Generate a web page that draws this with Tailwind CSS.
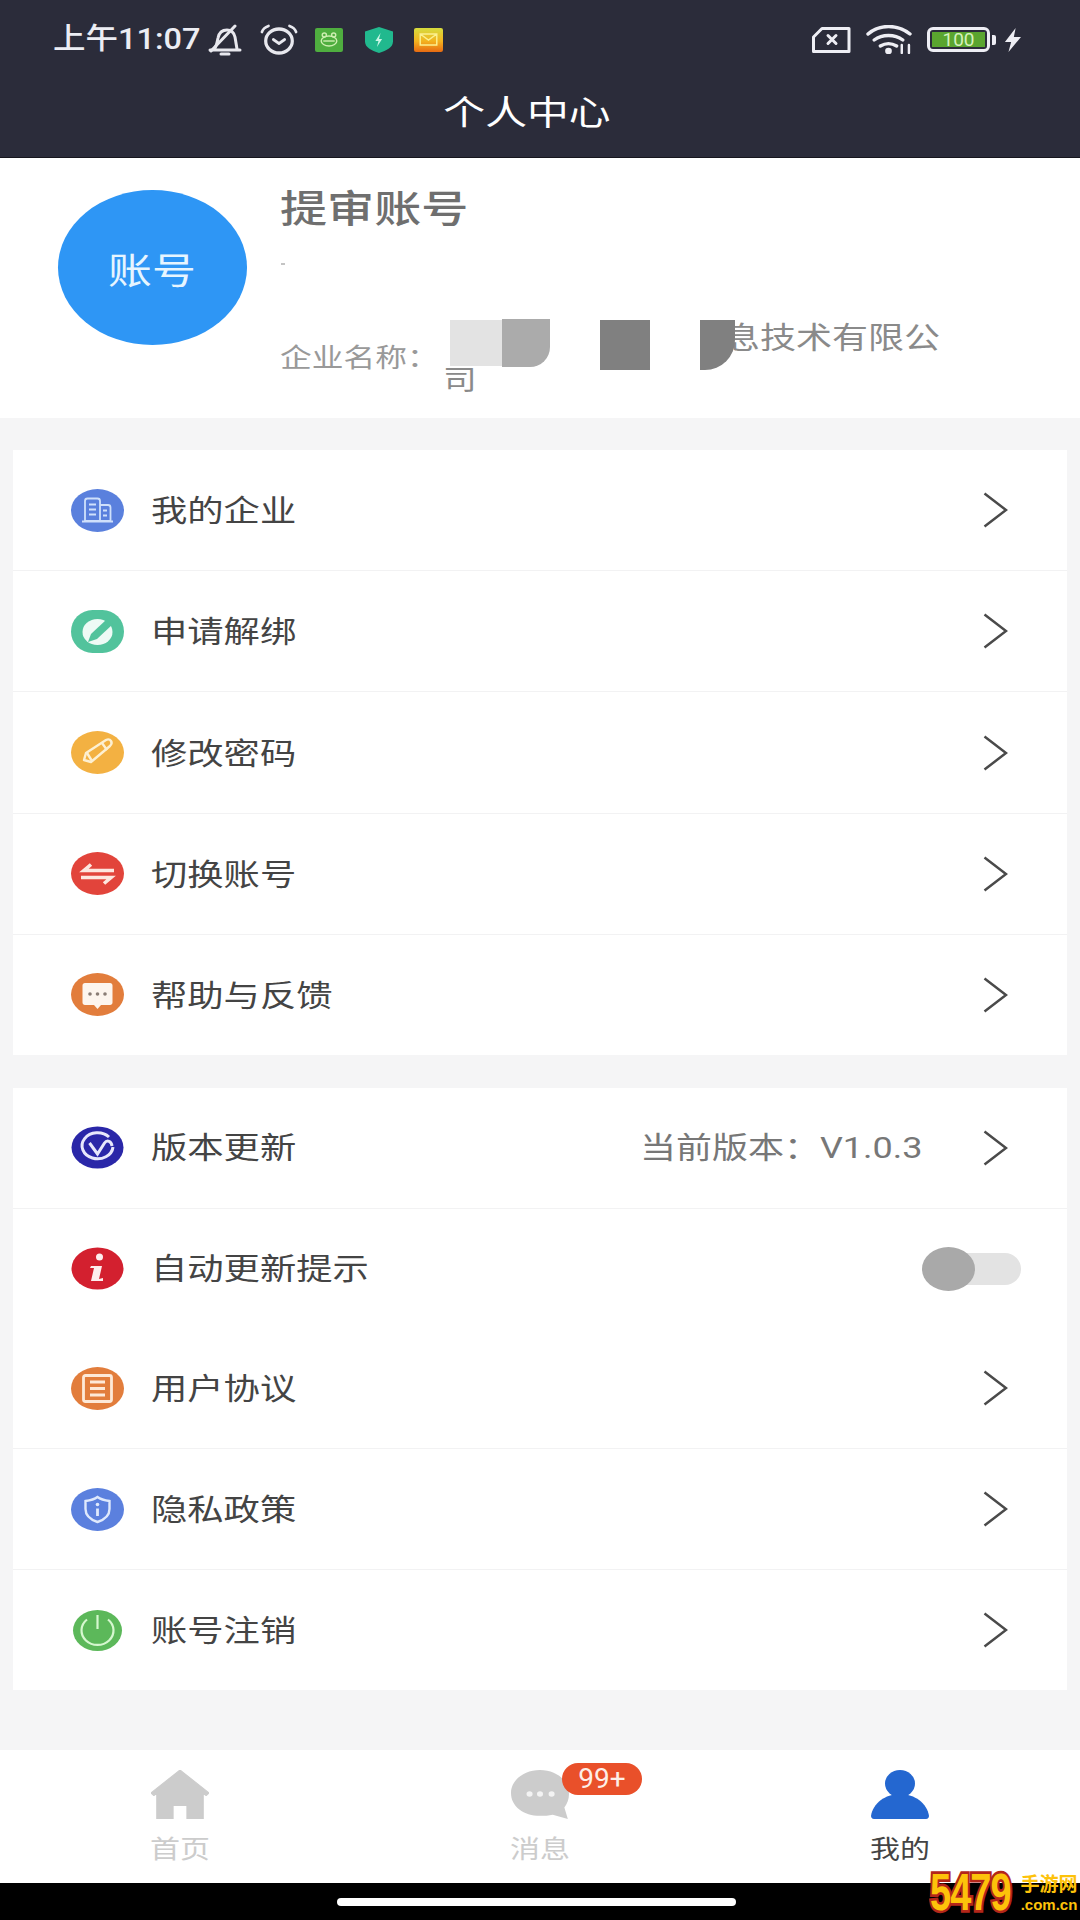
<!DOCTYPE html>
<html lang="zh-CN">
<head>
    <meta charset="UTF-8">
    <meta name="viewport" content="width=device-width, initial-scale=1.0">
    <title>个人中心</title>
    <script src="https://cdn.jsdelivr.net/npm/@tailwindcss/browser@4"></script>
</head>
<body class="bg-[#f5f5f6] font-['Noto_Sans_CJK_SC',sans-serif]">
<div class="relative flex h-[1920px] w-[1080px] flex-col overflow-hidden">

    <!-- header -->
    <header class="flex h-[158px] shrink-0 flex-col border-b border-[#16161d] bg-[#2b2c3a] text-white">
        <div class="flex h-[78px] items-center pl-[53px] pr-[59px] pt-[1px]">
            <span class="inline-block w-[147px] origin-left scale-x-[1.12] whitespace-nowrap font-['Roboto','Noto_Sans_CJK_SC',sans-serif] text-[29px] font-medium leading-none text-[#ecedf3]">上午11:07</span>
            <svg class="ml-[7px] h-[32px] w-[36px]" viewBox="0 0 36 32" preserveAspectRatio="none" fill="none" stroke="#e8e8ee" stroke-width="3" stroke-linecap="round" stroke-linejoin="round"><path d="M3 26h30M7 25c3-3 3-7 4-11 1-5 4-8 9-8 4 0 7 3 8 7l2 12"/><path d="M4 27 28 2"/><path d="M14 30h8"/></svg>
            <svg class="ml-[17px] h-[32px] w-[38px]" viewBox="0 0 40 32" preserveAspectRatio="none" fill="none" stroke="#e8e8ee" stroke-linecap="round" stroke-linejoin="round"><ellipse cx="20" cy="17" rx="14" ry="12" stroke-width="3.400"/><path d="M14 15.500l6 4 6-4" stroke-width="2.800"/><path d="M2 8c1-3 4-5 7-6M38 8c-1-3-4-5-7-6" stroke-width="2.800"/></svg>
            <svg class="ml-[17px] h-[24px] w-[28px]" viewBox="0 0 27 24" preserveAspectRatio="none"><rect width="27" height="24" rx="2" fill="#4fae3f"/><g fill="none" stroke="#cdeeb0" stroke-width="1.400"><circle cx="9" cy="7" r="2"/><circle cx="18" cy="7" r="2"/><ellipse cx="13.500" cy="13" rx="7.500" ry="5"/><path d="M8 13h11"/></g></svg>
            <svg class="ml-[22px] h-[26px] w-[28px]" viewBox="0 0 27 26" preserveAspectRatio="none"><path d="M13.500 0 27 4.500v10c0 6-6 9-13.500 11.500C6 23.500 0 20.500 0 14.500v-10z" fill="#21b98e"/><path d="M15 6l-5 8h3l-1.500 6 5-8h-3z" fill="#c9f5e5"/></svg>
            <svg class="ml-[21px] h-[24px] w-[29px]" viewBox="0 0 28 24" preserveAspectRatio="none"><defs><linearGradient id="mailbg" x1="0" y1="0" x2="0" y2="1"><stop offset="0" stop-color="#d6dc3e"/><stop offset="0.55" stop-color="#f3b31f"/><stop offset="1" stop-color="#e76a12"/></linearGradient></defs><rect width="28" height="24" rx="2" fill="url(#mailbg)"/><path d="M6 6h16v11H6zM6 6l8 6 8-6" fill="none" stroke="#fbf08f" stroke-width="1.400"/></svg>

            <svg class="ml-auto h-[26px] w-[39px]" viewBox="0 0 39 26" fill="none" stroke="#eeeef4" stroke-linecap="round" stroke-linejoin="round"><path d="M10 1.500h27v23H1.500V10z" stroke-width="3"/><path d="M16 8.500l8 8M24 8.500l-8 8" stroke-width="3"/></svg>
            <svg class="ml-[15px] h-[29px] w-[46px]" viewBox="0 0 45 29" preserveAspectRatio="none" fill="none" stroke="#eeeef4" stroke-width="3.400" stroke-linecap="round"><path d="M2 9C13-1 31-1 43 9"/><path d="M8 15c8-6 20-6 28 0"/><path d="M14 21c5-3 11-3 16 0"/><circle cx="22" cy="26" r="1.600" fill="#eeeef4"/><path d="M35 20v8M42 20v8" stroke-width="2.400"/></svg>
            <div class="ml-[15px] flex h-[25px] w-[63px] items-center rounded-[6px] border-[3px] border-[#eeeef4] p-[2px]">
                <span class="flex h-full w-full items-center justify-center bg-[#5aa52f] font-['Roboto',sans-serif] text-[19px] leading-none text-[#d5f2bc]">100</span>
            </div>
            <span class="ml-[2px] h-[10px] w-[4px] rounded-r-[2px] bg-[#eeeef4]"></span>
            <svg class="ml-[8px] h-[24px] w-[17px]" viewBox="0 0 19 24" preserveAspectRatio="none"><path d="M13 0 1 14h7l-3 10L19 9h-8z" fill="#eeeef4"/></svg>
        </div>
        <div class="flex flex-1 items-start justify-center pr-[26px] pt-[15px]">
            <span class="inline-block scale-x-[1.23] text-[34px] leading-[36px] text-white">个人中心</span>
        </div>
    </header>

    <!-- profile -->
    <section class="relative flex h-[260px] shrink-0 bg-white pl-[58px] pt-[32px]">
        <div class="flex h-[155px] w-[189px] shrink-0 items-center justify-center rounded-[50%] bg-[#2e96f5]">
            <span class="inline-block scale-x-[1.22] text-[36px] leading-none text-[#e6f5ff]">账号</span>
        </div>
        <div class="ml-[33px] flex flex-col">
            <span class="mt-[-4px] inline-block origin-left scale-x-[1.24] text-[38px] font-medium leading-[40px] text-[#6f6f6f]">提审账号</span>
            <span class="ml-[1px] mt-[37px] h-[2px] w-[4px] bg-[#c4c4c4]"></span>
            <div class="relative mt-[54px] h-[80px] w-[700px]">
                <span class="absolute left-0 top-[22px] inline-block origin-left scale-x-[1.22] whitespace-nowrap text-[26px] leading-[30px] text-[#999999]">企业名称：</span>
                <span class="absolute left-[444px] top-0 inline-block origin-left scale-x-[1.2] text-[30px] leading-[32px] text-[#8a8a8a]">息技术有限公</span>
                <span class="absolute left-[163px] top-[44px] inline-block origin-left scale-x-[1.2] text-[28px] leading-[30px] text-[#8a8a8a]">司</span>
                <span class="absolute left-[170px] top-[1px] h-[46px] w-[52px] bg-[#e3e3e3]"></span>
                <span class="absolute left-[222px] top-0 h-[48px] w-[48px] rounded-br-[20px] bg-[#ababab]"></span>
                <span class="absolute left-[320px] top-[1px] h-[50px] w-[50px] bg-[#808080]"></span>
                <span class="absolute left-[420px] top-[1px] h-[50px] w-[35px] rounded-br-[30px] bg-[#808080]"></span>
            </div>
        </div>
    </section>

    <!-- first group -->
    <section class="mx-[13px] mt-[32px] flex h-[605px] shrink-0 flex-col bg-white">
        <div class="flex flex-1 items-center border-b border-[#f2f2f3] pl-[58px] pr-[59px]">
            <svg class="h-[43px] w-[53px]" viewBox="0 0 53 43"><ellipse cx="26.500" cy="21.500" rx="26.500" ry="21.500" fill="#5a80dd"/><g fill="none" stroke="#cfe0fb" stroke-width="1.800"><path d="M14 12c0-1.500 1-2.500 2.500-2.500h10c1.500 0 2.500 1 2.500 2.500v20H14zM29 16h8c1.500 0 2.500 1 2.500 2.500V32H29M11 32.500h31"/><path d="M18 15.500h7M18 20.500h7M18 25.500h7M32 21.500h4M32 26.500h4"/></g></svg>
            <span class="mb-[4px] ml-[27px] inline-block origin-left scale-x-[1.21] text-[30px] leading-none text-[#444444]">我的企业</span>
            <svg class="ml-auto h-[36px] w-[25px]" viewBox="0 0 25 36" fill="none" stroke="#4a4a4a" stroke-width="2.500"><path d="M1.500 1.500 23 18 1.500 34.500"/></svg>
        </div>
        <div class="flex flex-1 items-center border-b border-[#f2f2f3] pl-[58px] pr-[59px]">
            <svg class="h-[43px] w-[53px]" viewBox="0 0 53 43"><rect width="53" height="43" rx="21.500" fill="#52c39c"/><ellipse cx="26.500" cy="22" rx="15" ry="13" fill="#eefaf5"/><path d="M17 32l3-8L36 9l6 5-16 15z" fill="#52c39c"/></svg>
            <span class="mb-[4px] ml-[27px] inline-block origin-left scale-x-[1.21] text-[30px] leading-none text-[#444444]">申请解绑</span>
            <svg class="ml-auto h-[36px] w-[25px]" viewBox="0 0 25 36" fill="none" stroke="#4a4a4a" stroke-width="2.500"><path d="M1.500 1.500 23 18 1.500 34.500"/></svg>
        </div>
        <div class="flex flex-1 items-center border-b border-[#f2f2f3] pl-[58px] pr-[59px]">
            <svg class="h-[43px] w-[53px]" viewBox="0 0 53 43"><ellipse cx="26.500" cy="21.500" rx="26.500" ry="21.500" fill="#f3b142"/><g fill="none" stroke="#fdf0d2" stroke-width="2.400" stroke-linejoin="round"><path d="M13 29l2-7 20-13c2-1 4-.5 5 1s.5 3.500-1 5L20 31z"/><path d="M16 22l5 8M31 12l5 7"/></g></svg>
            <span class="mb-[4px] ml-[27px] inline-block origin-left scale-x-[1.21] text-[30px] leading-none text-[#444444]">修改密码</span>
            <svg class="ml-auto h-[36px] w-[25px]" viewBox="0 0 25 36" fill="none" stroke="#4a4a4a" stroke-width="2.500"><path d="M1.500 1.500 23 18 1.500 34.500"/></svg>
        </div>
        <div class="flex flex-1 items-center border-b border-[#f2f2f3] pl-[58px] pr-[59px]">
            <svg class="h-[43px] w-[53px]" viewBox="0 0 53 43"><ellipse cx="26.500" cy="21.500" rx="26.500" ry="21.500" fill="#e2443b"/><g fill="none" stroke="#fde6df" stroke-width="3.600"><path d="M43 18.500H13l7-6"/><path d="M10 25.500h30l-7 6"/></g></svg>
            <span class="mb-[4px] ml-[27px] inline-block origin-left scale-x-[1.21] text-[30px] leading-none text-[#444444]">切换账号</span>
            <svg class="ml-auto h-[36px] w-[25px]" viewBox="0 0 25 36" fill="none" stroke="#4a4a4a" stroke-width="2.500"><path d="M1.500 1.500 23 18 1.500 34.500"/></svg>
        </div>
        <div class="flex flex-1 items-center pl-[58px] pr-[59px]">
            <svg class="h-[43px] w-[53px]" viewBox="0 0 53 43"><ellipse cx="26.500" cy="21.500" rx="26.500" ry="21.500" fill="#e27d3c"/><path d="M14 10h25c1.500 0 2.500 1 2.500 2.500v17c0 1.500-1 2.500-2.500 2.500h-9l-3.500 4-3.500-4h-9c-1.500 0-2.500-1-2.500-2.500v-17c0-1.500 1-2.500 2.500-2.500z" fill="#fdf5ee"/><g fill="#8a7d75"><circle cx="19" cy="21" r="1.800"/><circle cx="26.500" cy="21" r="1.800"/><circle cx="34" cy="21" r="1.800"/></g></svg>
            <span class="mb-[4px] ml-[27px] inline-block origin-left scale-x-[1.21] text-[30px] leading-none text-[#444444]">帮助与反馈</span>
            <svg class="ml-auto h-[36px] w-[25px]" viewBox="0 0 25 36" fill="none" stroke="#4a4a4a" stroke-width="2.500"><path d="M1.500 1.500 23 18 1.500 34.500"/></svg>
        </div>
    </section>

    <!-- second group -->
    <section class="mx-[13px] mt-[33px] flex h-[602px] shrink-0 flex-col bg-white">
        <div class="flex flex-1 items-center border-b border-[#f2f2f3] pl-[58px] pr-[59px]">
            <svg class="h-[43px] w-[53px]" viewBox="0 0 53 43"><ellipse cx="26.500" cy="21.500" rx="26" ry="21" fill="#2a27a8"/><path d="M38 11A15.500 13 0 1 0 42 21" fill="none" stroke="#e7e7fb" stroke-width="3"/><path d="M18.500 17l8 11 7-11c2.500-3.500 7-2 7.500 3" fill="none" stroke="#e7e7fb" stroke-width="3"/></svg>
            <span class="mb-[5px] ml-[27px] inline-block origin-left scale-x-[1.21] text-[30px] leading-none text-[#444444]">版本更新</span>
            <span class="mb-[3px] ml-auto inline-block origin-right scale-x-[1.2] whitespace-nowrap text-[30px] leading-none text-[#777777]">当前版本：<span class="font-['Roboto',sans-serif]">V1.0.3</span></span>
            <svg class="ml-[60px] h-[36px] w-[25px]" viewBox="0 0 25 36" fill="none" stroke="#4a4a4a" stroke-width="2.500"><path d="M1.500 1.500 23 18 1.500 34.500"/></svg>
        </div>
        <div class="flex flex-1 items-center pl-[58px] pr-[46px]">
            <svg class="h-[43px] w-[53px]" viewBox="0 0 53 43"><ellipse cx="26.500" cy="21.500" rx="26" ry="21" fill="#d3202f"/><circle cx="28.500" cy="10" r="3.500" fill="#fdeeee"/><path d="M20 19h11l-3 13 4-1v3H20l3-13h-4z" fill="#fdeeee"/></svg>
            <span class="mb-[5px] ml-[27px] inline-block origin-left scale-x-[1.21] text-[30px] leading-none text-[#444444]">自动更新提示</span>
            <div class="relative ml-auto h-[32px] w-[96px] rounded-full bg-[#e3e3e3]">
                <span class="absolute left-[-3px] top-[-6px] h-[44px] w-[53px] rounded-[50%] bg-[#a9a9a9]"></span>
            </div>
        </div>
        <div class="flex flex-1 items-center border-b border-[#f2f2f3] pl-[58px] pr-[59px]">
            <svg class="h-[43px] w-[53px]" viewBox="0 0 53 43"><ellipse cx="26.500" cy="21.500" rx="26.500" ry="21.500" fill="#e27d3c"/><rect x="12.500" y="8.500" width="28" height="26" rx="2" fill="none" stroke="#fde9d8" stroke-width="2.800"/><path d="M19 15h15M19 21.500h15M19 28h15" stroke="#fde9d8" stroke-width="2.800"/></svg>
            <span class="mb-[5px] ml-[27px] inline-block origin-left scale-x-[1.21] text-[30px] leading-none text-[#444444]">用户协议</span>
            <svg class="ml-auto h-[36px] w-[25px]" viewBox="0 0 25 36" fill="none" stroke="#4a4a4a" stroke-width="2.500"><path d="M1.500 1.500 23 18 1.500 34.500"/></svg>
        </div>
        <div class="flex flex-1 items-center border-b border-[#f2f2f3] pl-[58px] pr-[59px]">
            <svg class="h-[43px] w-[53px]" viewBox="0 0 53 43"><ellipse cx="26.500" cy="21.500" rx="26.500" ry="21.500" fill="#5b80de"/><path d="M26.500 9c4 3 8 3.500 12 4v8c0 7-6 11-12 13-6-2-12-6-12-13v-8c4-.5 8-1 12-4z" fill="none" stroke="#dfe9fc" stroke-width="2.400"/><circle cx="26.500" cy="16.500" r="1.800" fill="#dfe9fc"/><path d="M26.500 20.500v7.500" stroke="#dfe9fc" stroke-width="2.800"/></svg>
            <span class="mb-[5px] ml-[27px] inline-block origin-left scale-x-[1.21] text-[30px] leading-none text-[#444444]">隐私政策</span>
            <svg class="ml-auto h-[36px] w-[25px]" viewBox="0 0 25 36" fill="none" stroke="#4a4a4a" stroke-width="2.500"><path d="M1.500 1.500 23 18 1.500 34.500"/></svg>
        </div>
        <div class="flex flex-1 items-center pl-[58px] pr-[59px]">
            <svg class="h-[43px] w-[53px]" viewBox="0 0 53 43"><ellipse cx="26.500" cy="21.500" rx="24.500" ry="20.500" fill="#5cb85a"/><path d="M16 10.500a16 14.500 0 1 0 21 0" fill="none" stroke="#d5f7cf" stroke-width="2.200"/><path d="M26.500 6v14" stroke="#d5f7cf" stroke-width="2.200"/></svg>
            <span class="mb-[5px] ml-[27px] inline-block origin-left scale-x-[1.21] text-[30px] leading-none text-[#444444]">账号注销</span>
            <svg class="ml-auto h-[36px] w-[25px]" viewBox="0 0 25 36" fill="none" stroke="#4a4a4a" stroke-width="2.500"><path d="M1.500 1.500 23 18 1.500 34.500"/></svg>
        </div>
    </section>

    <!-- tab bar -->
    <nav class="mt-[60px] flex h-[133px] shrink-0 bg-white pt-[20px]">
        <div class="ml-[151px] flex w-[58px] flex-col items-center">
            <svg class="h-[49px] w-[58px]" viewBox="0 0 50 47" preserveAspectRatio="none"><path d="M25 0 50 22l-2.500 2.500-2.500-2V47H31V34H19v13H5V22.500L2.500 24.500 0 22z" fill="#cccccc" stroke="#cccccc" stroke-linejoin="round"/></svg>
            <span class="mt-[16px] inline-block scale-x-[1.2] whitespace-nowrap text-[25px] leading-[24px] text-[#cccccc]">首页</span>
        </div>
        <div class="relative ml-[302px] flex w-[58px] flex-col items-center">
            <svg class="h-[49px] w-[58px]" viewBox="0 0 50 47" preserveAspectRatio="none"><path d="M25 0c14 0 25 10 25 23 0 5-1.500 9-4 13l3 11-13-4c-3.500 1-7 1-11 1C11 44 0 35 0 22 0 10 11 0 25 0z" fill="#cccccc"/><g fill="#f3f3f3"><circle cx="16" cy="23" r="2.600"/><circle cx="25" cy="23" r="2.600"/><circle cx="35" cy="23" r="2.600"/></g></svg>
            <span class="mt-[16px] inline-block scale-x-[1.2] whitespace-nowrap text-[25px] leading-[24px] text-[#cccccc]">消息</span>
            <span class="absolute left-[51px] top-[-7px] flex h-[32px] w-[80px] items-center justify-center rounded-[17px] bg-[#e9502a] font-['Roboto',sans-serif] text-[28px] leading-none text-[#fdeee8]">99+</span>
        </div>
        <div class="ml-[302px] flex w-[58px] flex-col items-center">
            <svg class="h-[49px] w-[58px]" viewBox="0 0 58 47" preserveAspectRatio="none"><ellipse cx="29" cy="13" rx="15" ry="13" fill="#2467d0"/><path d="M0 44C2 32 14 23 29 23s27 9 29 21c0 2-1 3-3 3H3c-2 0-3-1-3-3z" fill="#2467d0"/></svg>
            <span class="mt-[16px] inline-block scale-x-[1.2] whitespace-nowrap text-[25px] leading-[24px] text-[#444444]">我的</span>
        </div>
    </nav>

    <!-- gesture bar -->
    <div class="flex flex-1 items-start justify-center bg-black pr-[7px] pt-[15px]">
        <span class="h-[8px] w-[399px] rounded-full bg-white"></span>
    </div>

    <!-- watermark -->
    <div class="absolute bottom-[4px] right-0 flex h-[48px] w-[150px] items-center">
        <span class="inline-block w-[85px] shrink-0 origin-left scale-y-[1.35] font-['Liberation_Sans',sans-serif] text-[38px] font-bold leading-none tracking-[-1px] text-[#fdc20a] [-webkit-text-stroke:4px_#b3261a] [paint-order:stroke]">5479</span>
        <div class="ml-[3px] flex w-[62px] shrink-0 flex-col items-center">
            <span class="whitespace-nowrap text-[19px] font-bold leading-[26px] text-[#fdc20a]">手游网</span>
            <span class="whitespace-nowrap font-['Liberation_Sans',sans-serif] text-[15px] font-bold leading-[18px] text-[#fdc20a]">.com.cn</span>
        </div>
    </div>
</div>
</body>
</html>
